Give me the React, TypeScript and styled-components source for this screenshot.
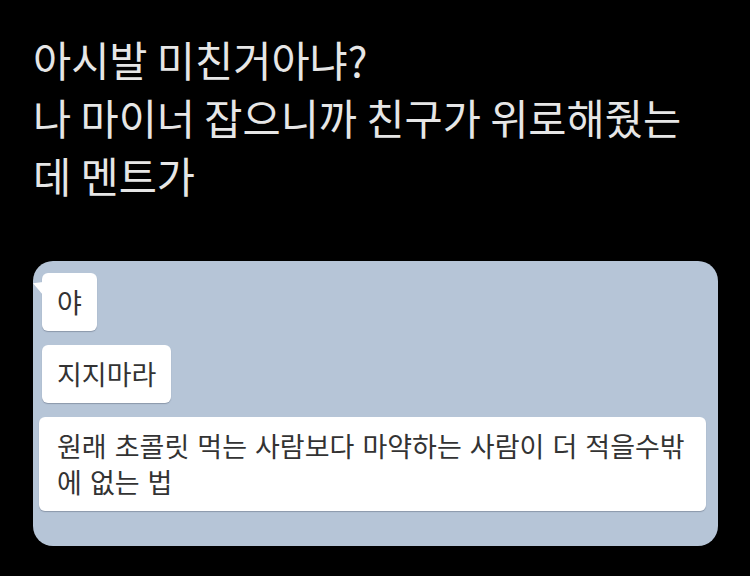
import React from "react";
import styled, { createGlobalStyle } from "styled-components";

const GlobalStyle = createGlobalStyle`
  html, body {
    margin: 0;
    padding: 0;
    background: #000;
  }
  body {
    width: 750px;
    height: 576px;
    overflow: hidden;
    font-family: "Noto Sans CJK KR", "Noto Sans", sans-serif;
  }
`;

const Page = styled.div`
  width: 750px;
  height: 576px;
  background: #000;
  box-sizing: border-box;
  padding: 30px 0 0 33px;
`;

const Caption = styled.p`
  margin: 0;
  width: 668px;
  color: #e6e6e6;
  font-size: 41.5px;
  line-height: 58px;
  font-weight: 400;
`;

const ChatPanel = styled.div`
  margin-top: 57px;
  width: 685px;
  height: 285px;
  box-sizing: border-box;
  background: #b6c5d7;
  border-radius: 20px;
  padding: 12px 12px 0 8px;
  display: flex;
  flex-direction: column;
  align-items: flex-start;
  gap: 14px;
`;

interface BubbleProps {
  $tail?: boolean;
  $shift?: number;
}

const Bubble = styled.div<BubbleProps>`
  position: relative;
  margin-left: ${(p) => p.$shift ?? 1}px;
  background: #fff;
  color: #333;
  border-radius: 6px;
  padding: 11px 15px;
  font-size: 27px;
  line-height: 36px;
  box-shadow: 0 1px 1px rgba(60, 70, 90, 0.35);
  box-sizing: border-box;

  ${(p) =>
    p.$tail &&
    `
    &::before {
      content: "";
      position: absolute;
      left: -9px;
      top: 9px;
      width: 10px;
      height: 13px;
      background: #fff;
      clip-path: polygon(0 10%, 100% 0, 100% 100%);
    }
  `}
`;

const WideBubble = styled(Bubble)`
  width: 667px;
  padding: 11px 18px;
  word-spacing: 2px;
`;

function App() {
  return (
    <>
      <GlobalStyle />
      <Page>
        <Caption>
          아시발 미친거아냐?
          <br />
          나 마이너 잡으니까 친구가 위로해줬는데 멘트가
        </Caption>
        <ChatPanel>
          <Bubble $tail>야</Bubble>
          <Bubble>지지마라</Bubble>
          <WideBubble $shift={-2}>
            원래 초콜릿 먹는 사람보다 마약하는 사람이 더 적을수밖에 없는 법
          </WideBubble>
        </ChatPanel>
      </Page>
    </>
  );
}

export default App;
